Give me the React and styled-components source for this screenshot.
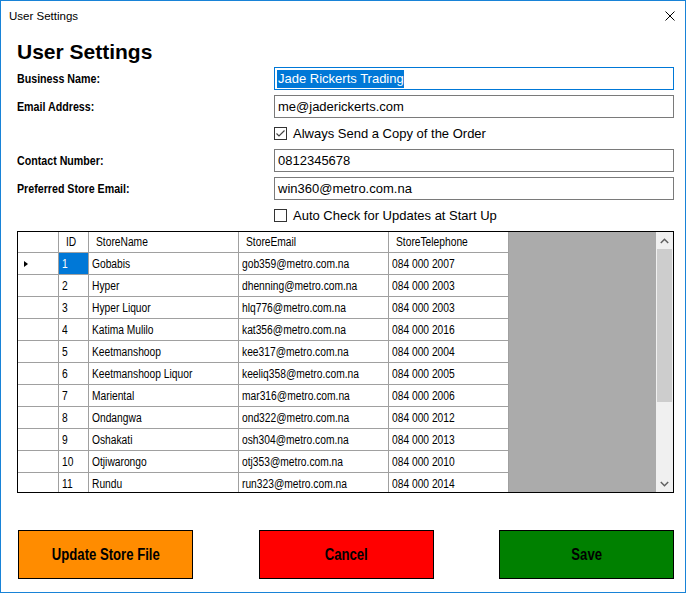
import React from 'react';
import styled, { createGlobalStyle } from 'styled-components';

const Global = createGlobalStyle`
  html, body { margin: 0; padding: 0; background: #fff; }
  #root { width: 686px; height: 593px; }
`;

const SANS = `"Liberation Sans", Arial, sans-serif`;

const Window = styled.div`
  box-sizing: border-box;
  width: 686px;
  height: 593px;
  border: 1px solid #1883d7;
  background: #fff;
  display: flex;
  flex-direction: column;
  overflow: hidden;
  color: #000;
`;

const TitleBar = styled.div`
  height: 30px;
  flex: none;
  display: flex;
  align-items: center;
  justify-content: space-between;
  padding: 0 10px 0 8px;
  font-family: ${SANS};
  font-size: 11.5px;
`;

const CloseIcon = () => (
  <svg width="10" height="10" viewBox="0 0 10 10">
    <path d="M0.5 0.5 L9.5 9.5 M9.5 0.5 L0.5 9.5" stroke="#000" strokeWidth="1" fill="none" />
  </svg>
);

/* condensed text, like Arial Narrow */
const Narrow = styled.span`
  display: inline-block;
  white-space: nowrap;
  transform: scaleX(0.82);
  transform-origin: ${p => (p.$center ? 'center' : 'left')} center;
`;

const Content = styled.div`
  flex: 1;
  display: flex;
  flex-direction: column;
  padding: 9px 11px 0 16px;
`;

const Heading = styled.h1`
  margin: 0;
  font-family: ${SANS};
  font-weight: bold;
  font-size: 21px;
  line-height: 24px;
`;

const Form = styled.div`
  display: flex;
  flex-direction: column;
  gap: 5px;
  margin-top: 3px;
`;

const Row = styled.div`
  display: grid;
  grid-template-columns: 257px 400px;
  align-items: center;
  height: ${p => p.$h}px;
`;

const Label = styled.div`
  font-family: ${SANS};
  font-weight: bold;
  font-size: 13px;
`;

const TextBox = styled.div`
  box-sizing: border-box;
  height: 23px;
  border: 1px solid ${p => (p.$focused ? '#0078d7' : '#7a7a7a')};
  padding: 0 3px;
  display: flex;
  align-items: center;
  font-family: ${SANS};
  font-size: 13px;
  white-space: nowrap;
`;

const Selected = styled.span`
  background: #0078d7;
  color: #fff;
  line-height: 18px;
  margin-left: -1px;
  padding-left: 1px;
`;

const CheckWrap = styled.label`
  grid-column: 2;
  display: flex;
  align-items: center;
  gap: 6px;
  font-family: ${SANS};
  font-size: 13px;
`;

const Box = styled.span`
  box-sizing: border-box;
  width: 13px;
  height: 13px;
  border: 1px solid #333;
  background: #fff;
  display: flex;
  align-items: center;
  justify-content: center;
`;

const CheckBox = ({ checked, children }) => (
  <CheckWrap>
    <Box>
      {checked && (
        <svg width="11" height="11" viewBox="0 0 11 11">
          <polyline points="1.5,5.5 4,8 9.5,2.5" fill="none" stroke="#444" strokeWidth="1.2" />
        </svg>
      )}
    </Box>
    {children}
  </CheckWrap>
);

const Grid = styled.div`
  box-sizing: border-box;
  margin-top: 5px;
  height: 262px;
  border: 1px solid #000;
  display: flex;
  overflow: hidden;
`;

const Table = styled.div`
  width: 491px;
  flex: none;
  display: flex;
  flex-direction: column;
  overflow: hidden;
  background: #fff;
`;

const Fill = styled.div`
  flex: 1;
  background: #ababab;
`;

const COLS = '41px 30px 150px 150px 120px';

const TR = styled.div`
  display: grid;
  grid-template-columns: ${COLS};
  flex: none;
  height: ${p => (p.$header ? 21 : 22)}px;
`;

const Cell = styled.div`
  box-sizing: border-box;
  border-right: 1px solid #a0a0a0;
  border-bottom: 1px solid #a0a0a0;
  padding-left: ${p => (p.$header ? 7 : 3)}px;
  display: flex;
  align-items: center;
  overflow: hidden;
  white-space: nowrap;
  font-family: ${SANS};
  font-size: 12.5px;
  background: ${p => (p.$selected ? '#0078d7' : '#fff')};
  color: ${p => (p.$selected ? '#fff' : '#000')};
`;

const RowHead = styled(Cell)`
  padding-left: 6px;
`;

const Arrow = styled.span`
  width: 0;
  height: 0;
  border-left: 4px solid #000;
  border-top: 3.5px solid transparent;
  border-bottom: 3.5px solid transparent;
`;

const ScrollBar = styled.div`
  width: 17px;
  flex: none;
  background: #f0f0f0;
  display: flex;
  flex-direction: column;
`;

const ScrollBtn = styled.div`
  height: 17px;
  flex: none;
  display: flex;
  align-items: center;
  justify-content: center;
`;

const Thumb = styled.div`
  height: 153px;
  margin: 0 1px;
  background: #cdcdcd;
  flex: none;
`;

const Track = styled.div`
  flex: 1;
`;

const Chevron = ({ up }) => (
  <svg width="9" height="6" viewBox="0 0 9 6">
    <polyline
      points={up ? '0.8,5 4.5,1.3 8.2,5' : '0.8,1 4.5,4.7 8.2,1'}
      fill="none"
      stroke="#606060"
      strokeWidth="1.5"
    />
  </svg>
);

const Buttons = styled.div`
  margin-top: 37px;
  padding-left: 1px;
  display: flex;
  justify-content: space-between;
`;

const Button = styled.button`
  box-sizing: border-box;
  width: 175px;
  height: 49px;
  border: 1px solid #000;
  background: ${p => p.$bg};
  font-family: ${SANS};
  font-weight: bold;
  font-size: 16px;
  color: #000;
  padding: 0;
  cursor: pointer;
`;

const stores = [
  [1, 'Gobabis', 'gob359@metro.com.na', '084 000 2007'],
  [2, 'Hyper', 'dhenning@metro.com.na', '084 000 2003'],
  [3, 'Hyper Liquor', 'hlq776@metro.com.na', '084 000 2003'],
  [4, 'Katima Mulilo', 'kat356@metro.com.na', '084 000 2016'],
  [5, 'Keetmanshoop', 'kee317@metro.com.na', '084 000 2004'],
  [6, 'Keetmanshoop Liquor', 'keeliq358@metro.com.na', '084 000 2005'],
  [7, 'Mariental', 'mar316@metro.com.na', '084 000 2006'],
  [8, 'Ondangwa', 'ond322@metro.com.na', '084 000 2012'],
  [9, 'Oshakati', 'osh304@metro.com.na', '084 000 2013'],
  [10, 'Otjiwarongo', 'otj353@metro.com.na', '084 000 2010'],
  [11, 'Rundu', 'run323@metro.com.na', '084 000 2014'],
];

export default function App() {
  return (
    <>
      <Global />
      <Window>
        <TitleBar>
          <span>User Settings</span>
          <CloseIcon />
        </TitleBar>
        <Content>
          <Heading>User Settings</Heading>
          <Form>
            <Row $h={23}>
              <Label><Narrow>Business Name:</Narrow></Label>
              <TextBox $focused>
                <Selected>Jade Rickerts Trading</Selected>
              </TextBox>
            </Row>
            <Row $h={23}>
              <Label><Narrow>Email Address:</Narrow></Label>
              <TextBox>me@jaderickerts.com</TextBox>
            </Row>
            <Row $h={21}>
              <CheckBox checked>Always Send a Copy of the Order</CheckBox>
            </Row>
            <Row $h={23}>
              <Label><Narrow>Contact Number:</Narrow></Label>
              <TextBox>0812345678</TextBox>
            </Row>
            <Row $h={23}>
              <Label><Narrow>Preferred Store Email:</Narrow></Label>
              <TextBox>win360@metro.com.na</TextBox>
            </Row>
            <Row $h={21}>
              <CheckBox>Auto Check for Updates at Start Up</CheckBox>
            </Row>
          </Form>
          <Grid>
            <Table>
              <TR $header>
                <Cell $header />
                <Cell $header><Narrow>ID</Narrow></Cell>
                <Cell $header><Narrow>StoreName</Narrow></Cell>
                <Cell $header><Narrow>StoreEmail</Narrow></Cell>
                <Cell $header><Narrow>StoreTelephone</Narrow></Cell>
              </TR>
              {stores.map(([id, name, email, tel], i) => (
                <TR key={id}>
                  <RowHead>{i === 0 && <Arrow />}</RowHead>
                  <Cell $selected={i === 0}><Narrow>{id}</Narrow></Cell>
                  <Cell><Narrow>{name}</Narrow></Cell>
                  <Cell><Narrow>{email}</Narrow></Cell>
                  <Cell><Narrow>{tel}</Narrow></Cell>
                </TR>
              ))}
            </Table>
            <Fill />
            <ScrollBar>
              <ScrollBtn><Chevron up /></ScrollBtn>
              <Thumb />
              <Track />
              <ScrollBtn><Chevron /></ScrollBtn>
            </ScrollBar>
          </Grid>
          <Buttons>
            <Button $bg="#ff8c00"><Narrow $center>Update Store File</Narrow></Button>
            <Button $bg="#ff0000"><Narrow $center>Cancel</Narrow></Button>
            <Button $bg="#008000"><Narrow $center>Save</Narrow></Button>
          </Buttons>
        </Content>
      </Window>
    </>
  );
}
